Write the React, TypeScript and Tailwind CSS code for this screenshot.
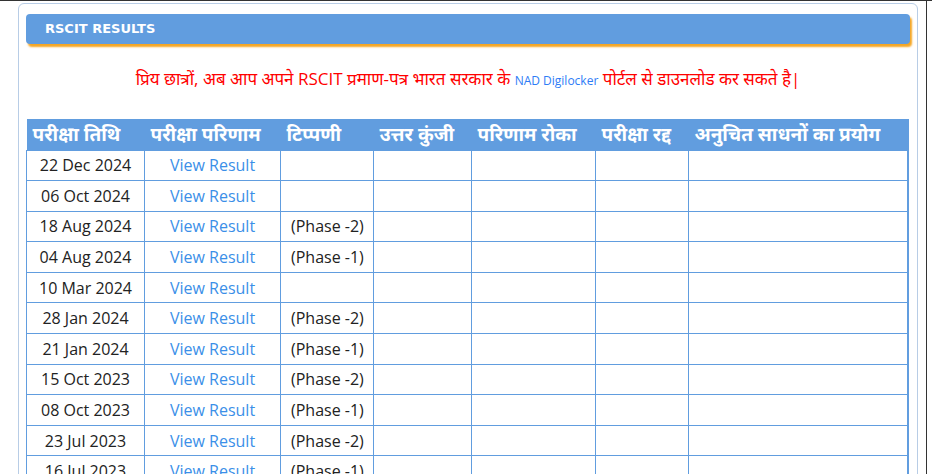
const rows: [string, string][] = [
  ['22 Dec 2024', ''],
  ['06 Oct 2024', ''],
  ['18 Aug 2024', '(Phase -2)'],
  ['04 Aug 2024', '(Phase -1)'],
  ['10 Mar 2024', ''],
  ['28 Jan 2024', '(Phase -2)'],
  ['21 Jan 2024', '(Phase -1)'],
  ['15 Oct 2023', '(Phase -2)'],
  ['08 Oct 2023', '(Phase -1)'],
  ['23 Jul 2023', '(Phase -2)'],
  ['16 Jul 2023', '(Phase -1)'],
];

const heads = ['परीक्षा तिथि', 'परीक्षा परिणाम', 'टिप्पणी', 'उत्तर कुंजी', 'परिणाम रोका', 'परीक्षा रद्द', 'अनुचित साधनों का प्रयोग'];
const widths = ['w-[118px]', 'w-[136px]', 'w-[93px]', 'w-[98px]', 'w-[124px]', 'w-[93px]', ''];

export default function App() {
  return (
    <div className="h-[474px] w-[932px] overflow-hidden bg-white border-t border-[#333]" style={{ fontFamily: '"Open Sans", "Noto Sans", sans-serif' }}>
      <div className="flex">
        <div className="ml-[18px] mt-[2px] w-[900px] h-[480px] rounded-md border border-[#b8cde6] px-[7px] pt-[10px]">
          <div className="h-[30px] bg-[#619ddf] rounded-sm shadow-[2px_3px_2px_#f5a623] flex items-center pl-[19px]">
            <span className="text-white font-bold text-[13px]" style={{ fontFamily: 'Tahoma, "DejaVu Sans", sans-serif' }}>RSCIT RESULTS</span>
          </div>
          <p className="text-center text-[#ff0000] text-[17px] mt-[23px] mb-[26px] leading-6">
            प्रिय छात्रों, अब आप अपने RSCIT प्रमाण-पत्र भारत सरकार के <span className="text-[#2e7cf6] text-[12px]">NAD Digilocker</span> पोर्टल से डाउनलोड कर सकते है|
          </p>
          <table className="w-[883px] border-collapse text-[16px] border-r-2 border-[#619ddf]">
            <thead>
              <tr className="bg-[#619ddf] h-[31px]">
                {heads.map((h, i) => (
                  <th key={i} className={`${widths[i]} text-white font-bold text-[19px] text-left pl-[6px] leading-none whitespace-nowrap`}>{h}</th>
                ))}
              </tr>
            </thead>
            <tbody>
              {rows.map(([d, n], i) => (
                <tr key={i} className="h-[30.6px]">
                  <td className="border border-[#619ddf] text-center text-[#222]">{d}</td>
                  <td className="border border-[#619ddf] text-center text-[#3b8fe8]">View Result</td>
                  <td className="border border-[#619ddf] pl-[10px] text-[#222]">{n}</td>
                  <td className="border border-[#619ddf]"></td>
                  <td className="border border-[#619ddf]"></td>
                  <td className="border border-[#619ddf]"></td>
                  <td className="border border-[#619ddf]"></td>
                </tr>
              ))}
            </tbody>
          </table>
        </div>
        <div className="ml-[8px] w-px h-[474px] bg-[#333]" />
      </div>
    </div>
  );
}
